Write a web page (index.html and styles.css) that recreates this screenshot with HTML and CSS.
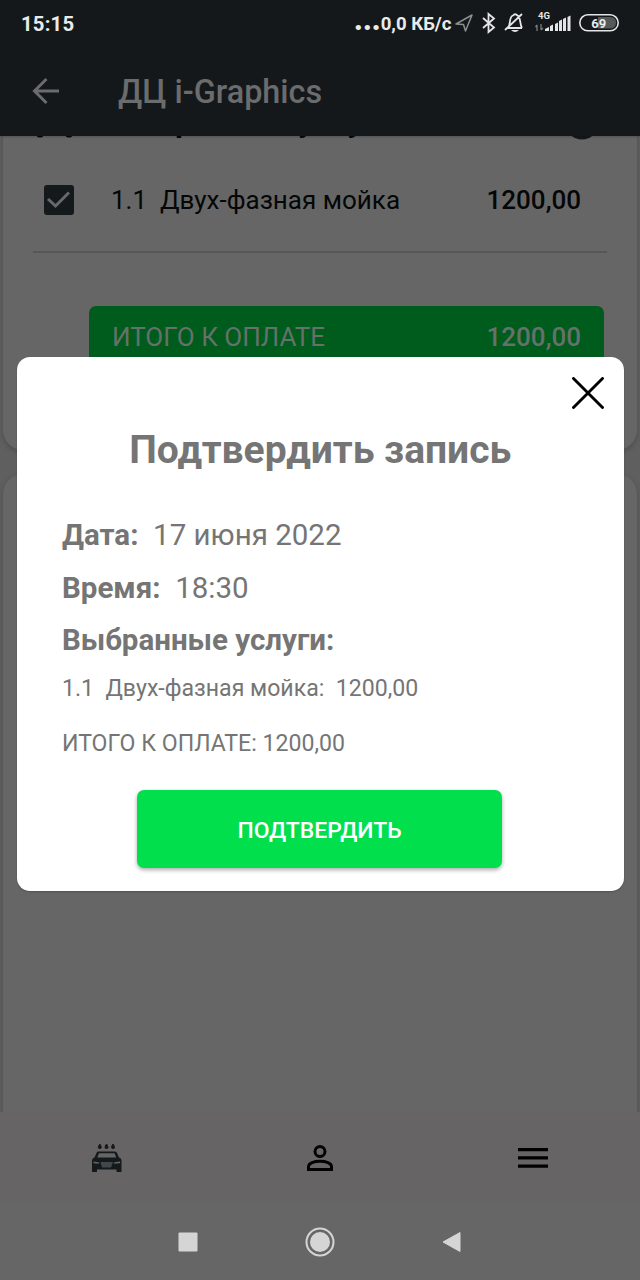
FILE: index.html
```
<!DOCTYPE html>
<html lang="ru">
<head>
<meta charset="utf-8">
<title>ДЦ i-Graphics</title>
<link rel="stylesheet" href="styles.css">
</head>
<body>
<div class="screen">
  <header class="top">
    <div class="status">
      <span class="clock">15:15</span>
      <span class="net"><b class="dots">...</b>0,0 КБ/с</span>
      <svg class="status-icons" width="186" height="30" viewBox="0 0 186 30" fill="none" stroke="#e4e6e6" stroke-width="1.6">
        <path d="M2 16 18 7 11.5 23 9.5 16.5Z" stroke="#8b8f8f" stroke-width="1.5" stroke-linejoin="round"/>
        <path d="M29 10 40 19.500 34.500 24V6L40 10.500 29 20" stroke-width="1.8"/>
        <path d="M53 20H68M54 20C57 17 54.500 9 59 7.500Q61 5 63.500 7.500C67 9 65.500 16 68 20M51 22 68 6" stroke-width="1.8"/>
        <path d="M57 22h8q-4 4-8 0Z" fill="#e4e6e6" stroke="none"/>
        <path d="M83 17v6M81.500 19l1.500-2M87 16v6M87 22l2-2" stroke="#777c7c" stroke-width="1.3"/>
        <g fill="#e4e6e6" stroke="none">
          <path d="M91 23v-2l4-2v4zM96 23v-5l3-1.500v6.500zM101 23v-7l3-1.500v8.500zM105 23v-10l3-1.500v11.500zM109 23v-12l3-1.500v13.500zM113.500 23v-14l3-1.500v15.500z"/>
          <text x="84" y="11" class="lte">4G</text>
        </g>
        <rect x="125.800" y="6.800" width="38.400" height="16" rx="8"/>
        <path d="M144 9h12q6 0 6 5.800t-6 5.800h-12z" fill="#555959" stroke="none"/>
        <text x="144.800" y="19.500" text-anchor="middle" class="battery">69</text>
      </svg>
    </div>
    <div class="toolbar">
      <svg width="28" height="28" viewBox="0 0 28 28" fill="none" stroke="#6a6c6d" stroke-width="3"><path d="M27 14H3M14.500 2 2.500 14 14.500 26"/></svg>
      <h1 class="app-title">ДЦ i-Graphics</h1>
    </div>
  </header>

  <main class="content">
    <section class="card card-services">
      <div class="group">
        <svg width="44" height="15" viewBox="0 0 44 15" fill="#050606"><circle cx="7" cy="8.500" r="4"/><circle cx="36" cy="8.500" r="4"/></svg>
        <span class="group-name">Выбранные услуги</span>
        <svg width="34" height="34" viewBox="0 0 34 34"><circle cx="17" cy="17" r="16.500" fill="#14191b"/></svg>
      </div>
      <div class="service">
        <svg width="30" height="30" viewBox="0 0 30 30"><rect width="30" height="30" rx="3" fill="#14191b"/><path d="M4 14 11.500 21 25 7.500" fill="none" stroke="#67696a" stroke-width="3"/></svg>
        <span class="service-name">1.1&nbsp; Двух-фазная мойка</span>
        <span class="price">1200,00</span>
      </div>
      <div class="total"><span>ИТОГО К ОПЛАТЕ</span><span class="price">1200,00</span></div>
    </section>
    <section class="card card-empty"></section>
  </main>

  <nav class="tabs">
    <svg width="32" height="30" viewBox="0 0 32 30" fill="#14191b">
      <path d="M8.800 1q3 4.500 0 4.500t0-4.500zM15.500 1q3 4.500 0 4.500t0-4.500zM22 1q3 4.500 0 4.500t0-4.500z" stroke="#14191b"/>
      <path fill-rule="evenodd" d="M7.500 8.500h16.500q1.500 0 2 1.500l2 4.500q2.500 .5 2.500 3v11.500h-5v-2.500h-19.500v2.500h-5v-11.500q0-2.500 2.500-3l2-4.500q.5-1.500 1.500-1.500zM8 10.200 6.300 14.500h19l-1.800-4.300zM2.500 18.500v1.800l6 .5-1-1.500zM29 18.500l-5.500.8-1 1.500 6.500-.5z"/>
      <path d="M9.500 19h12.500l-2 5.500H11z" fill="#41484a"/>
    </svg>
    <svg width="28" height="28" viewBox="0 0 28 28" fill="none" stroke="#020202" stroke-width="3"><circle cx="14" cy="7.500" r="5"/><path d="M2.500 25.500v-3c0-7 23-7 23 0v3z"/></svg>
    <svg width="30" height="22" viewBox="0 0 30 22" fill="#000"><path d="M0 1h30v3.300H0zM0 9.300h30v3.300H0zM0 17.500h30v3.300H0z"/></svg>
  </nav>
  <div class="system">
    <svg width="20" height="20" viewBox="0 0 20 20"><rect x=".5" y=".5" width="19" height="19" rx="1" fill="#d5d5d5"/></svg>
    <svg width="30" height="30" viewBox="0 0 30 30"><circle cx="15" cy="15" r="13.500" fill="none" stroke="#d5d5d5" stroke-width="2"/><circle cx="15" cy="15" r="10" fill="#d5d5d5"/></svg>
    <svg width="20" height="22" viewBox="0 0 20 22"><path d="M1 11 18 1.500v19z" fill="#d5d5d5" stroke="#d5d5d5" stroke-linejoin="round"/></svg>
  </div>

  <div class="dialog" role="dialog">
    <svg class="close" width="32" height="32" viewBox="0 0 32 32" fill="none" stroke="#000" stroke-width="2.900" stroke-linecap="round"><path d="M1.500 1.500l29 29M30.500 1.500l-29 29"/></svg>
    <h2 class="dialog-title">Подтвердить запись</h2>
    <p class="line"><b>Дата:</b>&nbsp; 17 июня 2022</p>
    <p class="line"><b>Время:</b>&nbsp; 18:30</p>
    <p class="line"><b>Выбранные услуги:</b></p>
    <p class="small item">1.1&nbsp; Двух-фазная мойка:&nbsp; 1200,00</p>
    <p class="small sum">ИТОГО К ОПЛАТЕ: 1200,00</p>
    <button class="confirm">ПОДТВЕРДИТЬ</button>
  </div>
</div>
</body>
</html>
```
FILE: styles.css
```
* { box-sizing: border-box; margin: 0; }
body { background: #666; font-family: Roboto, "Liberation Sans", sans-serif; }
svg { display: block; flex: none; }
.screen { position: relative; width: 640px; height: 1280px; overflow: hidden; display: flex; flex-direction: column; white-space: nowrap; }

.top { height: 136px; background: #14181a; flex: none; z-index: 1; box-shadow: 0 1px 2px #0003; }
.status { height: 46px; display: flex; align-items: center; padding-left: 21px; color: #e9ebeb; }
.clock { font-size: 20.3px; font-weight: 700; letter-spacing: .2px; width: 333px; padding-top: 1px; }
.net { font-size: 18.6px; font-weight: 700; width: 100px; }
.dots { font-size: 29px; line-height: 18px; letter-spacing: .1px; }
.lte { font-size: 9.5px; font-weight: 700; }
.battery { font-size: 13px; font-weight: 700; fill: #e9ebeb; stroke: none; }
.status-icons { overflow: visible; }
.toolbar { height: 90px; display: flex; align-items: center; padding-left: 32px; gap: 58px; }
.app-title { font-size: 32.4px; font-weight: 500; color: #6a6c6d; line-height: 40px; padding-top: 2px; }

.content { height: 976px; display: flex; flex-direction: column; gap: 24px; background: #5f5f5f; padding: 0 3px; flex: none; overflow: hidden; }
.card { background: #666; border-radius: 20px; flex: none; box-shadow: 0 2px 5px #0003; }
.card-services { height: 314px; padding: 0 30px; border-radius: 0 0 20px 20px; }
.card-empty { height: 700px; }
.group { height: 16px; display: flex; align-items: flex-end; padding: 0 8px 12px 0; }
.group-name { font-size: 31px; line-height: 28px; font-weight: 700; color: #050606; padding-left: 35px; margin-bottom: 4px; flex: 1; word-spacing: 4px; }
.service { height: 101px; display: flex; align-items: center; border-bottom: 2px solid #565656; padding: 0 26px 3px 11px; font-size: 26px; color: #050606; }
.service-name { padding-left: 37px; flex: 1; }
.price { font-weight: 500; }
.total { margin: 53px 0 0 56px; width: 515px; height: 64px; border-radius: 7px; background: #005c1d; color: #65716a; font-size: 26px; display: flex; justify-content: space-between; align-items: center; padding: 0 23px 2px 23px; }

.tabs { height: 92px; background: #676465; display: grid; grid-template-columns: repeat(3, 1fr); place-items: center; flex: none; padding-bottom: 1px; }
.system { height: 76px; display: flex; justify-content: center; align-items: center; gap: 107px; background: #666; flex: none; }

.dialog { position: absolute; z-index: 2; left: 16.5px; top: 357px; width: 607px; height: 534px; background: #fff; border-radius: 13px; display: flex; flex-direction: column; padding: 20px 20px 23px 45.5px; color: #757575; box-shadow: 0 1px 2px #0003; }
.close { align-self: flex-end; }
.dialog-title { font-size: 39px; line-height: 46px; font-weight: 700; margin: 18px 0 36px; padding-right: 25px; text-align: center; }
.line { font-size: 29.5px; line-height: 52.7px; }
.small { font-size: 23.1px; line-height: 28px; }
.item { margin-top: 8px; }
.sum { margin-top: 27px; }
.confirm { margin: auto 0 0 75px; width: 365px; height: 78px; flex: none; border: 0; border-radius: 7px; background: #02df4d; color: #fff; font: 500 22.9px Roboto, sans-serif; box-shadow: 0 2px 4px #0005; padding: 2px 0 0; }
```
